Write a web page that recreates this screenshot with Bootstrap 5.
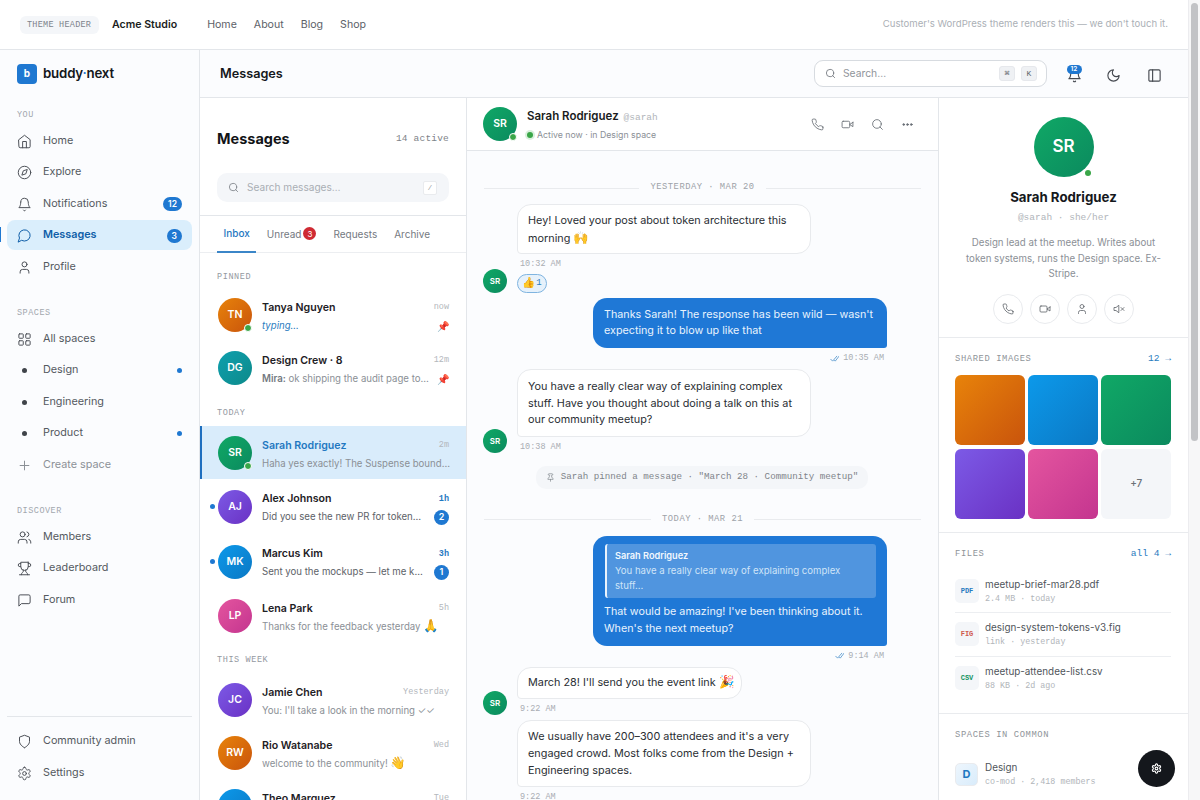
<!DOCTYPE html>
<html lang="en">
<head>
  <meta charset="UTF-8" />
  <title>buddy-next Messages</title>
  <link href="https://cdn.jsdelivr.net/npm/bootstrap@5.3.0/dist/css/bootstrap.min.css" rel="stylesheet">
  <style>
    html, body { height: 800px; overflow: hidden; }
    body { font-family: Inter, "Noto Sans", sans-serif; font-size: 12px; color: #24282e; background: #fff; }
    .mono { font-family: "Liberation Mono", "DejaVu Sans Mono", monospace; }
    .ico { fill: none; stroke: currentColor; stroke-width: 1.8; stroke-linecap: round; stroke-linejoin: round; flex: none; }
    .emo { font-size: 12.5px; line-height: 1; }
    .shell { width: 1188px; height: 800px; }
    .fake-scroll { width: 12px; height: 800px; background: #f7f7f8; border-left: 1px solid #ececef; padding: 3px 2px 0 2px; }
    .fake-thumb { height: 438px; background: #c2c3c6; border-radius: 4px; }

    .theme-head { height: 50px; padding: 0 20px; border-bottom: 1px solid #e3e6ea; flex: none; }
    .theme-tag { font-size: 8.5px; letter-spacing: .25px; color: #7d838b; background: #f4f6f9; border-radius: 6px; padding: 3px 7px; height: 18px; line-height: 12px; width: 79px; white-space: nowrap; }
    .theme-name { font-size: 10.6px; font-weight: 600; color: #1a1d21; margin-left: 13px; }
    .theme-links { margin-left: 30px; gap: 17px; }
    .theme-links a { font-size: 10.6px; color: #5c6168; text-decoration: none; }
    .theme-note { font-size: 9.6px; color: #abb0b6; margin-left: auto; }

    .side { width: 200px; height: 750px; background: #fbfcfe; border-right: 1px solid #e3e6ea; padding: 0 7px; }
    .brand { height: 47px; padding-left: 10px; gap: 6px; margin-bottom: 7px; }
    .brand-mark { width: 20px; height: 20px; border-radius: 4px; background: #1f78d1; color: #fff; font-size: 10px; font-weight: 700; }
    .brand-name { font-size: 13.3px; font-weight: 600; color: #14171b; letter-spacing: -.2px; }
    .brand-name i { color: #1f78d1; font-style: normal; }
    .side-label { font-size: 8.5px; letter-spacing: .5px; color: #a2a7ae; padding-left: 10px; height: 12px; line-height: 12px; margin: 5px 0 4.5px; }
    .side-list { display: flex; flex-direction: column; gap: 1.5px; margin-bottom: 20.5px; }
    .side-item { height: 30px; padding: 1px 10px 0; gap: 11.5px; font-size: 10.8px; color: #54595f; border-radius: 8px; position: relative; }
    .side-item .ico { width: 15px; height: 15px; margin-left: -.5px; stroke-width: 1.6; color: #4d5158; }
    .side-item.on { background: #daeefc; color: #0f5ea8; font-weight: 600; }
    .side-item.on .ico { color: #0f5ea8; }
    .side-item.on::before { content: ""; position: absolute; left: -7px; top: 7px; width: 1px; height: 15px; background: #1f78d1; }
    .side-item.dim { color: #8c9197; }
    .side-item.dim .ico { color: #8c9197; }
    .space-dot { width: 15px; height: 15px; margin-left: -.5px; flex: none; position: relative; }
    .space-dot::after { content: ""; position: absolute; left: 5px; top: 5px; width: 5px; height: 5px; border-radius: 50%; background: #3f4349; }
    .new-dot { width: 5px; height: 5px; border-radius: 50%; background: #1f78d1; margin-left: auto; }
    .count { margin-left: auto; background: #1f78d1; color: #fff; font-size: 8.5px; font-weight: 600; border-radius: 8px; height: 14px; min-width: 14px; padding: 0 5px; line-height: 14px; text-align: center; }
    .side-foot { margin-top: auto; margin-bottom: 0; border-top: 1px solid #e3e6ea; padding: 10px 0 12px; }
    .side-foot .side-item { padding-top: 0; }

    .top-strip { height: 48px; background: #fbfcfe; border-bottom: 1px solid #e3e6ea; padding: 0 26.5px 0 20px; }
    .top-title { font-size: 12.7px; font-weight: 600; color: #15181c; }
    .top-search { width: 233px; height: 27px; background: #fff; border: 1px solid #d7dbe0; border-radius: 9px; padding: 0 9px 0 10px; gap: 6px; color: #8f949a; font-size: 10.3px; margin-left: auto; }
    .top-search .ico { width: 11px; height: 11px; color: #6d7279; margin-right: 1px; }
    .kbd-key { width: 16px; height: 15px; border-radius: 3px; background: #eff1f4; border: 1px solid #e6e8ec; font-size: 8px; color: #60656b; }
    .top-btn { width: 15px; height: 15px; position: relative; color: #44484f; margin-left: 24px; }
    .top-btn .ico { width: 15px; height: 15px; }
    .top-btn.first { margin-left: 19.5px; }
    .top-btn.last { margin-left: 26px; }
    .top-badge { position: absolute; left: 0; top: -1.5px; height: 9px; width: 15px; border-radius: 5px; background: #1f78d1; color: #fff; font-size: 6.5px; line-height: 9px; text-align: center; font-weight: 600; }

    .col-list { width: 267px; height: 702px; border-right: 1px solid #e3e6ea; overflow: hidden; }
    .list-title { padding: 29px 17px 0 17px; height: 75px; }
    .list-title b { font-size: 14.5px; font-weight: 700; color: #121417; line-height: 24px; }
    .list-title span { font-size: 9.5px; color: #7e8389; letter-spacing: .2px; margin-top: 5px; }
    .list-search { margin: 0 17px 13px; height: 29px; background: #f4f6f9; border-radius: 10px; padding: 0 12px 0 11px; gap: 8px; font-size: 10.1px; color: #a9aeb4; }
    .list-search .ico { width: 11px; height: 11px; color: #7b8086; }
    .slash-key { margin-left: auto; width: 14px; height: 14px; background: #fff; border: 1px solid #e9ebee; border-radius: 2px; font-size: 8px; color: #9ea3a9; }
    .tab-row { border-top: 1px solid #e3e6ea; border-bottom: 1px solid #eceef1; height: 38px; padding: 0 17px; gap: 4px; }
    .tab-item { height: 37px; padding: 0 6.5px; font-size: 10px; color: #74797f; gap: 2px; }
    .tab-item.on { color: #1f78c1; font-weight: 500; border-bottom: 2px solid #3b86c8; }
    .red-count { width: 13px; height: 13px; border-radius: 50%; background: #cf2a33; color: #fff; font-size: 8px; margin-top: -2px; }
    .group-label { font-size: 8.5px; letter-spacing: .6px; color: #94999f; padding-left: 17px; height: 12px; line-height: 12px; }
    .group-pinned { margin: 17.5px 0 5.5px; }
    .group-today { margin: 13px 0 7px; }
    .group-week { margin: 12px 0 7px; }
    .conv { height: 53px; padding: 0 17px 0 18px; gap: 10px; position: relative; }
    .conv.tall { height: 55px; }
    .conv.on { background: #d9ecfb; border-left: 2px solid #1f6fbf; padding-left: 16px; }
    .conv.on .conv-name { color: #1f78c1; }
    .conv.unread::before { content: ""; position: absolute; left: 10px; top: 25px; width: 5px; height: 5px; border-radius: 50%; background: #1f78d1; }
    .face { border-radius: 50%; color: #fff; font-weight: 600; flex: none; position: relative; }
    .face-md { width: 34px; height: 34px; font-size: 10.5px; }
    .face-sm { width: 24px; height: 24px; font-size: 8px; }
    .face-lg { width: 60px; height: 60px; font-size: 17px; }
    .on-dot { position: absolute; right: 0; bottom: 0; width: 8px; height: 8px; border-radius: 50%; background: #3aa648; border: 1.5px solid #fff; }
    .g-orange { background: linear-gradient(135deg, #e8830a, #c9540c); }
    .g-teal { background: linear-gradient(135deg, #0e9fae, #0d8a8a); }
    .g-green { background: linear-gradient(135deg, #10a866, #0b8a5e); }
    .g-purple { background: linear-gradient(135deg, #7c5ae6, #6a31c4); }
    .g-blue { background: linear-gradient(135deg, #0c99ea, #0b78c4); }
    .g-pink { background: linear-gradient(135deg, #e4559f, #c4358f); }
    .conv-body { min-width: 0; flex: 1; margin-top: 4px; }
    .conv.tall .conv-body { margin-top: 3px; }
    .conv-name { font-size: 10.6px; font-weight: 600; color: #1d2024; line-height: 18px; }
    .conv-time { font-size: 8.5px; color: #b3b7bc; margin-left: auto; }
    .conv-time.new { color: #1f78c1; font-weight: 700; }
    .conv-text { font-size: 9.65px; color: #8b9096; line-height: 18px; white-space: nowrap; }
    .conv-text b { color: #74797f; font-weight: 600; }
    .conv-text.strong { color: #5d6268; }
    .conv-text.typing { color: #2a7cc0; font-style: italic; }
    .conv-pin { font-size: 10px; line-height: 1; margin-left: auto; }
    .unread-count { width: 15px; height: 15px; border-radius: 50%; background: #1f78d1; color: #fff; font-size: 9px; font-weight: 600; flex: none; margin-left: auto; }

    .col-chat { width: 472px; height: 702px; background: #fbfcfe; border-right: 1px solid #e3e6ea; overflow: hidden; }
    .chat-head { height: 53px; background: #fff; border-bottom: 1px solid #e3e6ea; padding: 0 24px 0 16px; gap: 10px; flex: none; }
    .chat-who { padding-top: 2px; }
    .chat-name { font-size: 11.5px; font-weight: 600; color: #1a1d21; line-height: 18px; }
    .chat-name span { font-family: "Liberation Mono", monospace; font-weight: 400; font-size: 9.5px; color: #b1b5ba; margin-left: 2px; }
    .chat-status { font-size: 8.75px; color: #8b9096; line-height: 16px; gap: 4px; }
    .status-dot { width: 6px; height: 6px; background: #3aa648; border-radius: 50%; box-shadow: 0 0 0 2px #d9f0dc; }
    .chat-acts { margin-left: auto; gap: 17px; color: #6a6f76; }
    .chat-acts .ico { width: 13px; height: 13px; stroke-width: 1.6; }
    .chat-flow { padding: 30px 17px 0 16px; }
    .day-line { gap: 11px; font-size: 8.8px; letter-spacing: .5px; color: #9da2a8; height: 12px; padding-top: 2px; white-space: nowrap; margin-left: 1px; }
    .day-line::before, .day-line::after { content: ""; flex: 1; border-top: 1px solid #e9ebee; }
    .msg-left { gap: 10px; align-items: flex-end; }
    .msg-stack { width: 294px; }
    .bubble { display: inline-block; font-size: 10.85px; line-height: 16.7px; border-radius: 14px; vertical-align: top; }
    .bubble.them { padding: 7.5px 10px; background: #fff; border: 1px solid #e8eaed; color: #2a2e33; border-bottom-left-radius: 4px; }
    .bubble.me { padding: 8.5px 11px; font-size: 10.75px; background: #1f78d6; color: #e9f3fd; border-bottom-right-radius: 3px; width: 294px; display: block; }
    .bubble.them.single { padding: 6.5px 6px 6.5px 10px; }
    .bubble.them.with-emo { padding-block: 6px; line-height: 18px; }
    .stamp { font-size: 8.5px; color: #a9adb3; line-height: 12px; margin-top: 3px; padding-top: 1px; }
    .stamp.them-side { padding-left: 3px; }
    .stamp.me-side { padding-right: 3px; gap: 4px; }
    .stamp .ico { width: 9px; height: 9px; color: #2a7cc0; }
    .msg-right { margin-left: 110px; width: 294px; }
    .react-pill { width: 30px; height: 19px; border: 1px solid #7fb4e0; background: #e6f1fb; border-radius: 10px; font-size: 9px; color: #2a7cc0; margin-top: 4px; gap: 1px; }
    .react-pill .emo { font-size: 10.5px; }
    .sys-note { width: 332px; height: 23px; background: #f4f6f9; border-radius: 10px; font-size: 9.2px; color: #7f848a; gap: 6px; white-space: nowrap; }
    .sys-note .ico { width: 9px; height: 9px; }
    .quote-box { height: 54px; background: rgba(255,255,255,.22); border-left: 2px solid #e9f3fd; border-radius: 3px; padding: 5px 8px 0 8px; margin: 0 0 6px 1px; font-size: 9.6px; line-height: 15px; color: #cfe4f8; }
    .quote-box b { display: block; font-size: 9.2px; line-height: 14px; color: #f2f8fe; font-weight: 600; }
    .flow-5 { margin-top: 5px; }
    .flow-11 { margin-top: 11px; }
    .flow-13 { margin-top: 13px; }
    .flow-24 { margin-top: 24px; }
    .no-face { margin-left: 34px; }

    .col-info { width: 249px; height: 702px; overflow: hidden; }
    .info-top { height: 240px; padding-top: 19px; border-bottom: 1px solid #e9ebee; text-align: center; flex: none; }
    .info-top .on-dot { width: 6px; height: 6px; border: 0; right: 3px; bottom: 1px; }
    .info-name { font-size: 13.25px; font-weight: 700; color: #15181c; margin-top: 10px; line-height: 20px; }
    .info-handle { font-size: 9.5px; color: #b1b5ba; margin-top: 5px; line-height: 12px; }
    .info-bio { font-size: 9.7px; color: #8b9096; line-height: 15.5px; margin: 11px 22px 0; }
    .info-btns { gap: 7px; margin-top: 12px; }
    .round-btn { width: 30px; height: 30px; border-radius: 50%; border: 1px solid #e9ebee; color: #5d6268; background: #fff; }
    .round-btn .ico { width: 12px; height: 12px; stroke-width: 1.6; }
    .info-sec { padding: 14px 17px 0 16px; border-bottom: 1px solid #e9ebee; flex: none; }
    .sec-images { height: 195px; }
    .sec-files { height: 181px; }
    .sec-head { height: 12px; padding-top: 3px; font-size: 8.8px; letter-spacing: .6px; color: #8f9499; }
    .sec-head a { font-size: 9.6px; letter-spacing: 0; color: #2a7cc0; text-decoration: none; }
    .thumb-grid { display: grid; grid-template-columns: repeat(3, 69.7px); grid-auto-rows: 70px; gap: 3.5px; margin-top: 11px; }
    .thumb-grid div { border-radius: 6px; }
    .thumb-more { background: #f4f6f9; color: #6b7076; font-size: 10px; font-weight: 500; }
    .file-list { margin-top: 11px; }
    .file-row { height: 43.3px; gap: 6px; border-bottom: 1px solid #eceef1; }
    .file-row:last-child { border-bottom: 0; }
    .file-type { width: 24px; height: 24px; background: #f4f6f9; border-radius: 5px; font-size: 7px; font-weight: 700; flex: none; }
    .type-pdf { color: #2a7cc0; }
    .type-fig { color: #cf5a4c; }
    .type-csv { color: #12925f; }
    .file-name { font-size: 9.9px; color: #50555b; line-height: 16px; }
    .file-meta { font-size: 8.4px; color: #b1b5ba; line-height: 14px; }
    .space-row { gap: 7px; margin-top: 19px; }
    .space-mark { width: 23px; height: 23px; border-radius: 5px; background: linear-gradient(135deg, #eef6fd, #d9ecfb); color: #1f78c1; font-size: 11px; font-weight: 700; border: 1px solid #e9ebee; flex: none; }
    .help-fab { position: absolute; left: 1138px; top: 750px; width: 37px; height: 37px; border-radius: 50%; background: #14171c; color: #fff; }
    .help-fab .ico { width: 11px; height: 11px; stroke-width: 2.4; }
  </style>
</head>
<body class="d-flex position-relative">

  <svg width="0" height="0" class="position-absolute">
    <symbol id="i-home" viewBox="0 0 24 24"><path d="m3 9 9-7 9 7v11a2 2 0 0 1-2 2H5a2 2 0 0 1-2-2z"/><polyline points="9 22 9 12 15 12 15 22"/></symbol>
    <symbol id="i-compass" viewBox="0 0 24 24"><circle cx="12" cy="12" r="10"/><polygon points="16.24 7.76 14.12 14.12 7.76 16.24 9.88 9.88"/></symbol>
    <symbol id="i-bell" viewBox="0 0 24 24"><path d="M6 8a6 6 0 0 1 12 0c0 7 3 9 3 9H3s3-2 3-9"/><path d="M10.3 21a1.94 1.94 0 0 0 3.4 0"/></symbol>
    <symbol id="i-chat" viewBox="0 0 24 24"><path d="M7.9 20A9 9 0 1 0 4 16.1L2 22Z"/></symbol>
    <symbol id="i-user" viewBox="0 0 24 24"><path d="M19 21v-2a4 4 0 0 0-4-4H9a4 4 0 0 0-4 4v2"/><circle cx="12" cy="7" r="4"/></symbol>
    <symbol id="i-grid" viewBox="0 0 24 24"><rect x="3" y="3" width="7" height="7" rx="1"/><rect x="14" y="3" width="7" height="7" rx="1"/><rect x="14" y="14" width="7" height="7" rx="1"/><rect x="3" y="14" width="7" height="7" rx="1"/></symbol>
    <symbol id="i-plus" viewBox="0 0 24 24"><path d="M5 12h14"/><path d="M12 5v14"/></symbol>
    <symbol id="i-users" viewBox="0 0 24 24"><path d="M16 21v-2a4 4 0 0 0-4-4H6a4 4 0 0 0-4 4v2"/><circle cx="9" cy="7" r="4"/><path d="M22 21v-2a4 4 0 0 0-3-3.87"/><path d="M16 3.13a4 4 0 0 1 0 7.75"/></symbol>
    <symbol id="i-trophy" viewBox="0 0 24 24"><path d="M6 9H4.5a2.5 2.5 0 0 1 0-5H6"/><path d="M18 9h1.5a2.5 2.5 0 0 0 0-5H18"/><path d="M4 22h16"/><path d="M10 14.66V17c0 .55-.47.98-.97 1.21C7.85 18.75 7 20.24 7 22"/><path d="M14 14.66V17c0 .55.47.98.97 1.21C16.15 18.75 17 20.24 17 22"/><path d="M18 2H6v7a6 6 0 0 0 12 0V2Z"/></symbol>
    <symbol id="i-forum" viewBox="0 0 24 24"><path d="M21 15a2 2 0 0 1-2 2H7l-4 4V5a2 2 0 0 1 2-2h14a2 2 0 0 1 2 2z"/></symbol>
    <symbol id="i-shield" viewBox="0 0 24 24"><path d="M12 22s8-4 8-10V5l-8-3-8 3v7c0 6 8 10 8 10"/></symbol>
    <symbol id="i-gear" viewBox="0 0 24 24"><path d="M12.22 2h-.44a2 2 0 0 0-2 2v.18a2 2 0 0 1-1 1.73l-.43.25a2 2 0 0 1-2 0l-.15-.08a2 2 0 0 0-2.73.73l-.22.38a2 2 0 0 0 .73 2.73l.15.1a2 2 0 0 1 1 1.72v.51a2 2 0 0 1-1 1.74l-.15.09a2 2 0 0 0-.73 2.73l.22.38a2 2 0 0 0 2.73.73l.15-.08a2 2 0 0 1 2 0l.43.25a2 2 0 0 1 1 1.73V20a2 2 0 0 0 2 2h.44a2 2 0 0 0 2-2v-.18a2 2 0 0 1 1-1.73l.43-.25a2 2 0 0 1 2 0l.15.08a2 2 0 0 0 2.73-.73l.22-.39a2 2 0 0 0-.73-2.73l-.15-.08a2 2 0 0 1-1-1.74v-.5a2 2 0 0 1 1-1.74l.15-.09a2 2 0 0 0 .73-2.73l-.22-.38a2 2 0 0 0-2.73-.73l-.15.08a2 2 0 0 1-2 0l-.43-.25a2 2 0 0 1-1-1.73V4a2 2 0 0 0-2-2z"/><circle cx="12" cy="12" r="3"/></symbol>
    <symbol id="i-search" viewBox="0 0 24 24"><circle cx="11" cy="11" r="8"/><path d="m21 21-4.3-4.3"/></symbol>
    <symbol id="i-phone" viewBox="0 0 24 24"><path d="M22 16.92v3a2 2 0 0 1-2.18 2 19.79 19.79 0 0 1-8.63-3.07 19.5 19.5 0 0 1-6-6 19.79 19.79 0 0 1-3.07-8.67A2 2 0 0 1 4.11 2h3a2 2 0 0 1 2 1.72 12.84 12.84 0 0 0 .7 2.81 2 2 0 0 1-.45 2.11L8.09 9.91a16 16 0 0 0 6 6l1.27-1.27a2 2 0 0 1 2.11-.45 12.84 12.84 0 0 0 2.81.7A2 2 0 0 1 22 16.92z"/></symbol>
    <symbol id="i-video" viewBox="0 0 24 24"><path d="m22 8-6 4 6 4V8Z"/><rect x="2" y="6" width="14" height="12" rx="2"/></symbol>
    <symbol id="i-moon" viewBox="0 0 24 24"><path d="M12 3a6 6 0 0 0 9 9 9 9 0 1 1-9-9Z"/></symbol>
    <symbol id="i-panel" viewBox="0 0 24 24"><rect x="3" y="3" width="18" height="18" rx="2"/><path d="M9 3v18"/></symbol>
    <symbol id="i-mute" viewBox="0 0 24 24"><path d="M11 5 6 9H2v6h4l5 4z"/><path d="m22 9-6 6"/><path d="m16 9 6 6"/></symbol>
    <symbol id="i-pin" viewBox="0 0 24 24"><path d="M12 17v5"/><path d="M9 10.76a2 2 0 0 1-1.11 1.79l-1.78.9A2 2 0 0 0 5 15.24V17h14v-1.76a2 2 0 0 0-1.11-1.79l-1.78-.9A2 2 0 0 1 15 10.76V6h1a2 2 0 0 0 0-4H8a2 2 0 0 0 0 4h1z"/></symbol>
    <symbol id="i-ticks" viewBox="0 0 24 24"><path d="M2 14l5 5L18 6"/><path d="M12 17l2 2L24 6"/></symbol>
    <symbol id="i-dots" viewBox="0 0 24 24"><circle cx="5" cy="12" r="1.6" fill="currentColor"/><circle cx="12" cy="12" r="1.6" fill="currentColor"/><circle cx="19" cy="12" r="1.6" fill="currentColor"/></symbol>
  </svg>

  <div class="shell d-flex flex-column">
    <header class="theme-head d-flex align-items-center">
      <span class="theme-tag mono">THEME HEADER</span>
      <span class="theme-name">Acme Studio</span>
      <nav class="theme-links d-flex"><a href="#">Home</a><a href="#">About</a><a href="#">Blog</a><a href="#">Shop</a></nav>
      <span class="theme-note">Customer's WordPress theme renders this — we don't touch it.</span>
    </header>

    <div class="d-flex">
      <aside class="side d-flex flex-column flex-shrink-0">
        <div class="brand d-flex align-items-center">
          <span class="brand-mark d-flex align-items-center justify-content-center">b</span>
          <span class="brand-name">buddy<i>·</i>next</span>
        </div>
        <div class="side-label mono">YOU</div>
        <div class="side-list">
          <div class="side-item d-flex align-items-center"><svg class="ico"><use href="#i-home"/></svg>Home</div>
          <div class="side-item d-flex align-items-center"><svg class="ico"><use href="#i-compass"/></svg>Explore</div>
          <div class="side-item d-flex align-items-center"><svg class="ico"><use href="#i-bell"/></svg>Notifications<span class="count">12</span></div>
          <div class="side-item on d-flex align-items-center"><svg class="ico"><use href="#i-chat"/></svg>Messages<span class="count">3</span></div>
          <div class="side-item d-flex align-items-center"><svg class="ico"><use href="#i-user"/></svg>Profile</div>
        </div>
        <div class="side-label mono">SPACES</div>
        <div class="side-list">
          <div class="side-item d-flex align-items-center"><svg class="ico"><use href="#i-grid"/></svg>All spaces</div>
          <div class="side-item d-flex align-items-center"><span class="space-dot"></span>Design<span class="new-dot"></span></div>
          <div class="side-item d-flex align-items-center"><span class="space-dot"></span>Engineering</div>
          <div class="side-item d-flex align-items-center"><span class="space-dot"></span>Product<span class="new-dot"></span></div>
          <div class="side-item dim d-flex align-items-center"><svg class="ico"><use href="#i-plus"/></svg>Create space</div>
        </div>
        <div class="side-label mono">DISCOVER</div>
        <div class="side-list">
          <div class="side-item d-flex align-items-center"><svg class="ico"><use href="#i-users"/></svg>Members</div>
          <div class="side-item d-flex align-items-center"><svg class="ico"><use href="#i-trophy"/></svg>Leaderboard</div>
          <div class="side-item d-flex align-items-center"><svg class="ico"><use href="#i-forum"/></svg>Forum</div>
        </div>
        <div class="side-list side-foot">
          <div class="side-item d-flex align-items-center"><svg class="ico"><use href="#i-shield"/></svg>Community admin</div>
          <div class="side-item d-flex align-items-center"><svg class="ico"><use href="#i-gear"/></svg>Settings</div>
        </div>
      </aside>

      <div class="flex-grow-1">
        <div class="top-strip d-flex align-items-center">
          <span class="top-title">Messages</span>
          <div class="top-search d-flex align-items-center">
            <svg class="ico"><use href="#i-search"/></svg><span>Search…</span>
            <span class="kbd-key mono d-flex align-items-center justify-content-center ms-auto">⌘</span>
            <span class="kbd-key mono d-flex align-items-center justify-content-center">K</span>
          </div>
          <div class="top-btn first"><svg class="ico"><use href="#i-bell"/></svg><span class="top-badge">12</span></div>
          <div class="top-btn"><svg class="ico"><use href="#i-moon"/></svg></div>
          <div class="top-btn last"><svg class="ico"><use href="#i-panel"/></svg></div>
        </div>

        <div class="d-flex">
          <section class="col-list flex-shrink-0">
            <div class="list-title d-flex justify-content-between align-items-start">
              <b>Messages</b><span class="mono">14 active</span>
            </div>
            <div class="list-search d-flex align-items-center">
              <svg class="ico"><use href="#i-search"/></svg>Search messages…
              <span class="slash-key mono d-flex align-items-center justify-content-center">/</span>
            </div>
            <div class="tab-row d-flex">
              <div class="tab-item on d-flex align-items-center">Inbox</div>
              <div class="tab-item d-flex align-items-center">Unread <span class="red-count d-flex align-items-center justify-content-center">3</span></div>
              <div class="tab-item d-flex align-items-center">Requests</div>
              <div class="tab-item d-flex align-items-center">Archive</div>
            </div>

            <div class="group-label group-pinned mono">PINNED</div>
            <div class="conv d-flex align-items-center">
              <div class="face face-md g-orange d-flex align-items-center justify-content-center">TN<span class="on-dot"></span></div>
              <div class="conv-body">
                <div class="d-flex align-items-center"><span class="conv-name">Tanya Nguyen</span><span class="conv-time mono">now</span></div>
                <div class="d-flex align-items-center"><div class="conv-text typing">typing…</div><span class="conv-pin">📌</span></div>
              </div>
            </div>
            <div class="conv d-flex align-items-center">
              <div class="face face-md g-teal d-flex align-items-center justify-content-center">DG</div>
              <div class="conv-body">
                <div class="d-flex align-items-center"><span class="conv-name">Design Crew · 8</span><span class="conv-time mono">12m</span></div>
                <div class="d-flex align-items-center"><div class="conv-text"><b>Mira:</b> ok shipping the audit page to…</div><span class="conv-pin">📌</span></div>
              </div>
            </div>

            <div class="group-label group-today mono">TODAY</div>
            <div class="conv on d-flex align-items-center">
              <div class="face face-md g-green d-flex align-items-center justify-content-center">SR<span class="on-dot"></span></div>
              <div class="conv-body">
                <div class="d-flex align-items-center"><span class="conv-name">Sarah Rodriguez</span><span class="conv-time mono">2m</span></div>
                <div class="conv-text">Haha yes exactly! The Suspense bound…</div>
              </div>
            </div>
            <div class="conv tall unread d-flex align-items-center">
              <div class="face face-md g-purple d-flex align-items-center justify-content-center">AJ</div>
              <div class="conv-body">
                <div class="d-flex align-items-center"><span class="conv-name">Alex Johnson</span><span class="conv-time new mono">1h</span></div>
                <div class="d-flex align-items-center"><div class="conv-text strong">Did you see the new PR for token…</div><span class="unread-count d-flex align-items-center justify-content-center">2</span></div>
              </div>
            </div>
            <div class="conv tall unread d-flex align-items-center">
              <div class="face face-md g-blue d-flex align-items-center justify-content-center">MK</div>
              <div class="conv-body">
                <div class="d-flex align-items-center"><span class="conv-name">Marcus Kim</span><span class="conv-time new mono">3h</span></div>
                <div class="d-flex align-items-center"><div class="conv-text strong">Sent you the mockups — let me k…</div><span class="unread-count d-flex align-items-center justify-content-center">1</span></div>
              </div>
            </div>
            <div class="conv d-flex align-items-center">
              <div class="face face-md g-pink d-flex align-items-center justify-content-center">LP</div>
              <div class="conv-body">
                <div class="d-flex align-items-center"><span class="conv-name">Lena Park</span><span class="conv-time mono">5h</span></div>
                <div class="conv-text">Thanks for the feedback yesterday <span class="emo">🙏</span></div>
              </div>
            </div>

            <div class="group-label group-week mono">THIS WEEK</div>
            <div class="conv d-flex align-items-center">
              <div class="face face-md g-purple d-flex align-items-center justify-content-center">JC</div>
              <div class="conv-body">
                <div class="d-flex align-items-center"><span class="conv-name">Jamie Chen</span><span class="conv-time mono">Yesterday</span></div>
                <div class="conv-text">You: I'll take a look in the morning ✓✓</div>
              </div>
            </div>
            <div class="conv d-flex align-items-center">
              <div class="face face-md g-orange d-flex align-items-center justify-content-center">RW</div>
              <div class="conv-body">
                <div class="d-flex align-items-center"><span class="conv-name">Rio Watanabe</span><span class="conv-time mono">Wed</span></div>
                <div class="conv-text">welcome to the community! <span class="emo">👋</span></div>
              </div>
            </div>
            <div class="conv d-flex align-items-center">
              <div class="face face-md g-blue d-flex align-items-center justify-content-center">TM</div>
              <div class="conv-body">
                <div class="d-flex align-items-center"><span class="conv-name">Theo Marquez</span><span class="conv-time mono">Tue</span></div>
                <div class="conv-text">Shipped it</div>
              </div>
            </div>
          </section>

          <section class="col-chat flex-shrink-0 d-flex flex-column">
            <div class="chat-head d-flex align-items-center">
              <div class="face face-md g-green d-flex align-items-center justify-content-center">SR<span class="on-dot"></span></div>
              <div class="chat-who">
                <div class="chat-name">Sarah Rodriguez <span>@sarah</span></div>
                <div class="chat-status d-flex align-items-center"><span class="status-dot"></span>Active now · in Design space</div>
              </div>
              <div class="chat-acts d-flex align-items-center">
                <svg class="ico"><use href="#i-phone"/></svg>
                <svg class="ico"><use href="#i-video"/></svg>
                <svg class="ico"><use href="#i-search"/></svg>
                <svg class="ico"><use href="#i-dots"/></svg>
              </div>
            </div>
            <div class="chat-flow">
              <div class="day-line mono d-flex align-items-center">YESTERDAY · MAR 20</div>
              <div class="msg-left flow-11 d-flex">
                <div class="face face-sm g-green d-flex align-items-center justify-content-center">SR</div>
                <div class="msg-stack">
                  <div class="bubble them with-emo w-100">Hey! Loved your post about token architecture this morning <span class="emo">🙌</span></div>
                  <div class="stamp them-side mono">10:32 AM</div>
                  <div class="react-pill d-flex align-items-center justify-content-center"><span class="emo">👍</span><span class="mono">1</span></div>
                </div>
              </div>
              <div class="msg-right flow-5">
                <div class="bubble me">Thanks Sarah! The response has been wild — wasn't expecting it to blow up like that</div>
                <div class="stamp me-side mono d-flex justify-content-end align-items-center"><svg class="ico"><use href="#i-ticks"/></svg>10:35 AM</div>
              </div>
              <div class="msg-left flow-5 d-flex">
                <div class="face face-sm g-green d-flex align-items-center justify-content-center">SR</div>
                <div class="msg-stack">
                  <div class="bubble them w-100">You have a really clear way of explaining complex stuff. Have you thought about doing a talk on this at our community meetup?</div>
                  <div class="stamp them-side mono">10:38 AM</div>
                </div>
              </div>
              <div class="flow-13 d-flex justify-content-center">
                <div class="sys-note mono d-flex align-items-center justify-content-center"><svg class="ico"><use href="#i-pin"/></svg>Sarah pinned a message · "March 28 · Community meetup"</div>
              </div>
              <div class="day-line flow-24 mono d-flex align-items-center">TODAY · MAR 21</div>
              <div class="msg-right flow-11">
                <div class="bubble me">
                  <div class="quote-box"><b>Sarah Rodriguez</b>You have a really clear way of explaining complex stuff…</div>
                  That would be amazing! I've been thinking about it. When's the next meetup?
                </div>
                <div class="stamp me-side mono d-flex justify-content-end align-items-center"><svg class="ico"><use href="#i-ticks"/></svg>9:14 AM</div>
              </div>
              <div class="msg-left flow-5 d-flex">
                <div class="face face-sm g-green d-flex align-items-center justify-content-center">SR</div>
                <div class="msg-stack">
                  <div class="bubble them single">March 28! I'll send you the event link <span class="emo">🎉</span></div>
                  <div class="stamp them-side mono">9:22 AM</div>
                </div>
              </div>
              <div class="msg-left no-face flow-5 d-flex">
                <div class="msg-stack">
                  <div class="bubble them w-100">We usually have 200–300 attendees and it's a very engaged crowd. Most folks come from the Design + Engineering spaces.</div>
                  <div class="stamp them-side mono">9:22 AM</div>
                </div>
              </div>
            </div>
          </section>

          <aside class="col-info d-flex flex-column flex-shrink-0">
            <div class="info-top">
              <div class="face face-lg g-green d-flex align-items-center justify-content-center mx-auto">SR<span class="on-dot"></span></div>
              <div class="info-name">Sarah Rodriguez</div>
              <div class="info-handle mono">@sarah · she/her</div>
              <div class="info-bio">Design lead at the meetup. Writes about token systems, runs the Design space. Ex-Stripe.</div>
              <div class="info-btns d-flex justify-content-center">
                <div class="round-btn d-flex align-items-center justify-content-center"><svg class="ico"><use href="#i-phone"/></svg></div>
                <div class="round-btn d-flex align-items-center justify-content-center"><svg class="ico"><use href="#i-video"/></svg></div>
                <div class="round-btn d-flex align-items-center justify-content-center"><svg class="ico"><use href="#i-user"/></svg></div>
                <div class="round-btn d-flex align-items-center justify-content-center"><svg class="ico"><use href="#i-mute"/></svg></div>
              </div>
            </div>
            <div class="info-sec sec-images">
              <div class="sec-head mono d-flex justify-content-between align-items-center">SHARED IMAGES<a href="#">12 →</a></div>
              <div class="thumb-grid">
                <div class="g-orange"></div><div class="g-blue"></div><div class="g-green"></div>
                <div class="g-purple"></div><div class="g-pink"></div>
                <div class="thumb-more d-flex align-items-center justify-content-center">+7</div>
              </div>
            </div>
            <div class="info-sec sec-files">
              <div class="sec-head mono d-flex justify-content-between align-items-center">FILES<a href="#">all 4 →</a></div>
              <div class="file-list">
                <div class="file-row d-flex align-items-center"><span class="file-type type-pdf mono d-flex align-items-center justify-content-center">PDF</span><div><div class="file-name">meetup-brief-mar28.pdf</div><div class="file-meta mono">2.4 MB · today</div></div></div>
                <div class="file-row d-flex align-items-center"><span class="file-type type-fig mono d-flex align-items-center justify-content-center">FIG</span><div><div class="file-name">design-system-tokens-v3.fig</div><div class="file-meta mono">link · yesterday</div></div></div>
                <div class="file-row d-flex align-items-center"><span class="file-type type-csv mono d-flex align-items-center justify-content-center">CSV</span><div><div class="file-name">meetup-attendee-list.csv</div><div class="file-meta mono">88 KB · 2d ago</div></div></div>
              </div>
            </div>
            <div class="info-sec border-0">
              <div class="sec-head mono d-flex align-items-center">SPACES IN COMMON</div>
              <div class="space-row d-flex align-items-center">
                <span class="space-mark d-flex align-items-center justify-content-center">D</span>
                <div><div class="file-name">Design</div><div class="file-meta mono">co-mod · 2,418 members</div></div>
              </div>
            </div>
          </aside>
        </div>
      </div>
    </div>
  </div>

  <div class="fake-scroll flex-shrink-0"><div class="fake-thumb"></div></div>
  <div class="help-fab d-flex align-items-center justify-content-center"><svg class="ico"><use href="#i-gear"/></svg></div>
</body>
</html>
